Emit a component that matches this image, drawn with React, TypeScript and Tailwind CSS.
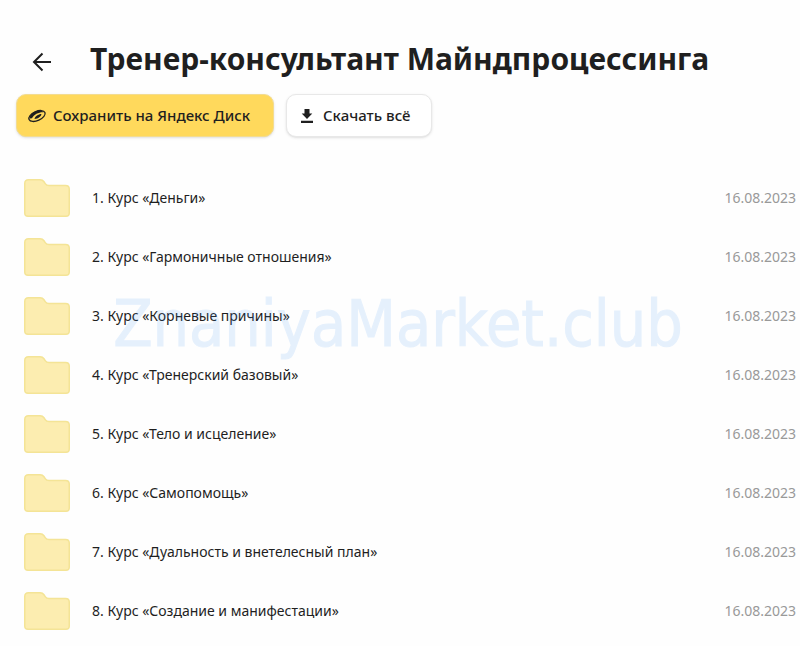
const courses = [
  'Деньги',
  'Гармоничные отношения',
  'Корневые причины',
  'Тренерский базовый',
  'Тело и исцеление',
  'Самопомощь',
  'Дуальность и внетелесный план',
  'Создание и манифестации',
];

function BackIcon() {
  return (
    <svg viewBox="0 0 20 20" className="size-5" fill="none" stroke="currentColor" strokeWidth="2" aria-hidden="true">
      <path d="M19 10H2.500M10.500 1.500 2 10l8.500 8.500" />
    </svg>
  );
}

function DiskIcon() {
  return (
    <svg viewBox="0 0 20 16" className="h-4 w-5" aria-hidden="true">
      <g transform="rotate(-24 10 8)">
        <ellipse cx="10" cy="8" rx="8.700" ry="4.600" fill="none" stroke="currentColor" strokeWidth="1.300" />
        <path d="M2.500 7.500C3 4.500 7 3 11 3.200c3.500.2 6 1.800 6.500 4C14 5.200 8 5 4.500 8Z" fill="currentColor" />
        <path d="M6.500 9.700C8 7.500 12 6.800 14.800 8c-1 2.200-5 3.200-8.300 1.700Z" fill="currentColor" />
      </g>
    </svg>
  );
}

function DownloadIcon() {
  return (
    <svg viewBox="0 0 12 14" className="h-3.5 w-3" fill="currentColor" aria-hidden="true">
      <path d="M3.500 0h5v4.500h2.800L6 10 .7 4.500h2.800ZM0 11.800h12V14H0Z" />
    </svg>
  );
}

function FolderIcon() {
  return (
    <svg viewBox="0 0 46 38" className="block h-[38px] w-[46px]" aria-hidden="true">
      <path
        d="M.75 4.500C.75 2 2 .75 4.500.75H16c2 0 3 .5 4 2l1.200 1.800C22 5.800 23 6.500 25 6.500h16.500c2.500 0 3.750 1.250 3.750 3.500v24c0 2.200-1.200 3.250-3.250 3.250H4C2 37.250.75 36.200.75 34Z"
        fill="#fcedb0"
        stroke="#f4e496"
        strokeWidth="1.500"
      />
    </svg>
  );
}

export default function App() {
  return (
    <main className="relative min-h-screen bg-[#fefefe] pt-[35px] font-['Noto_Sans',sans-serif] text-[#1f1f1f]">
      <header className="flex h-12 items-center pl-8">
        <button type="button" aria-label="Назад" className="mt-1.5 mr-[38px]">
          <BackIcon />
        </button>
        <h1 className="text-[30px] leading-[46px] font-bold whitespace-nowrap">
          Тренер-консультант Майндпроцессинга
        </h1>
      </header>

      <div className="mt-[11px] flex gap-3 pl-4 text-[15px] font-medium whitespace-nowrap">
        <button
          type="button"
          className="flex h-[43px] w-[258px] items-center gap-1.5 rounded-[10px] border border-[#f3dc90] bg-[#ffd95c] pl-2.5 shadow"
        >
          <DiskIcon />
          Сохранить на Яндекс Диск
        </button>
        <button
          type="button"
          className="flex h-[43px] w-[146px] items-center gap-2.5 rounded-[10px] border border-[#e8e8e8] bg-white pl-3.5 shadow"
        >
          <DownloadIcon />
          Скачать всё
        </button>
      </div>

      <table className="mt-[31px] w-full border-collapse whitespace-nowrap">
        <tbody>
          {courses.map((course, index) => (
            <tr key={course} className="h-[59px]">
              <td className="w-[92px] py-0 pl-6">
                <FolderIcon />
              </td>
              <td className="p-0 text-sm">
                {index + 1}. Курс «{course}»
              </td>
              <td className="py-0 pr-1 text-right text-sm text-[#999]">16.08.2023</td>
            </tr>
          ))}
        </tbody>
      </table>

      <div className="pointer-events-none absolute inset-x-0 top-[284px] pr-1 text-center font-['DejaVu_Sans_Condensed','DejaVu_Sans',sans-serif] text-[64px] leading-[80px] text-[#3b93f5] opacity-12 [-webkit-text-stroke:1px_#3b93f5]">
        ZnaniyaMarket.club
      </div>
    </main>
  );
}
